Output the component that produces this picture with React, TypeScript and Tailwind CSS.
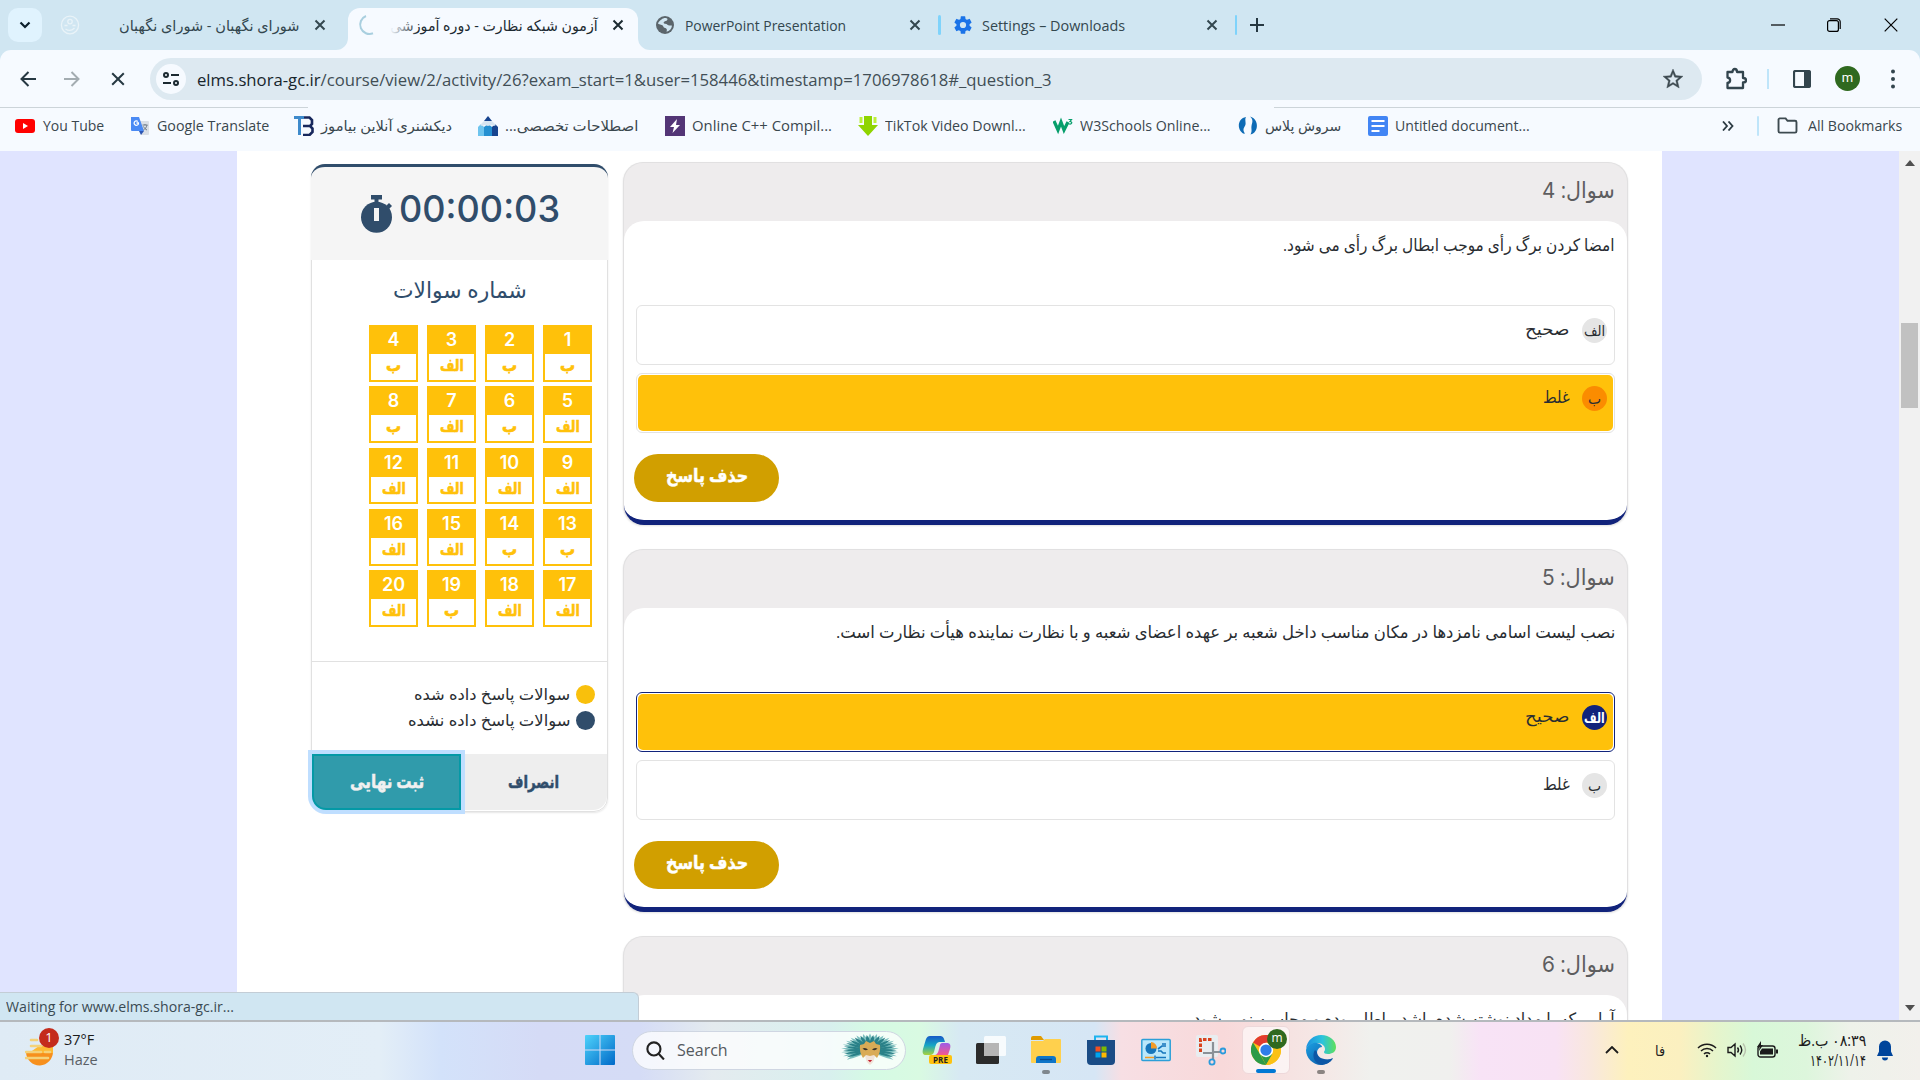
import { useLayoutEffect, useRef, useState } from "react";
import type { ReactNode } from "react";

/* Single line of text set to an exact measure. */
function Fit({ w, rtl, className = "", children }: { w: number; rtl?: boolean; className?: string; children: ReactNode }) {
  const ref = useRef<HTMLSpanElement>(null);
  const [scale, setScale] = useState(1);
  useLayoutEffect(() => {
    if (ref.current) setScale(w / ref.current.offsetWidth);
  }, [w]);
  return (
    <span dir="ltr" className={"block shrink-0 whitespace-nowrap " + className} style={{ width: w }}>
      <span ref={ref} dir={rtl ? "rtl" : "ltr"} className="inline-block origin-left" style={{ transform: `scaleX(${scale})` }}>
        {children}
      </span>
    </span>
  );
}

function Cross({ className = "" }: { className?: string }) {
  return (
    <svg viewBox="0 0 12 12" className={"h-3 w-3 shrink-0 " + className} fill="none" stroke="currentColor" strokeWidth="2">
      <path d="M1.5 1.5l9 9M10.5 1.5l-9 9" />
    </svg>
  );
}

function TabStrip() {
  return (
    <div className="flex h-[50px] items-center bg-[#d0e6f2] text-[14.5px] text-[#33474f]">
      <div className="ml-2 flex h-[34px] w-[34px] shrink-0 items-center justify-center rounded-[10px] bg-[#e0f3fe]">
        <svg viewBox="0 0 12 12" className="h-3 w-3" fill="none" stroke="#0c1f2b" strokeWidth="2.2"><path d="M1.5 3.5L6 8l4.5-4.5" /></svg>
      </div>
      <svg viewBox="0 0 20 20" className="ml-[18px] h-5 w-5 shrink-0" fill="none" stroke="#e9f3f8" strokeWidth="1.3">
        <ellipse cx="10" cy="10" rx="8.6" ry="8.8" /><circle cx="10" cy="6.6" r="2.2" /><path d="M4.5 10.5h3M12.5 10.5h3M5.5 14c3 2 6 2 9-1" />
      </svg>
      <Fit w={180} rtl className="ml-[39px] text-[15px]">شورای نگهبان - شورای نگهبان</Fit>
      <Cross className="ml-[15px]" />
      <div className="relative ml-[22px] flex h-[42px] w-[290px] shrink-0 items-center self-end rounded-t-[12px] bg-[#f6faff] pb-2 text-[#1c2a31]">
        <svg viewBox="0 0 12 12" className="absolute bottom-0 -left-3 h-3 w-3" fill="#f6faff"><path d="M12 0v12H0A12 12 0 0 0 12 0z" /></svg>
        <svg viewBox="0 0 12 12" className="absolute -right-3 bottom-0 h-3 w-3" fill="#f6faff"><path d="M0 0v12h12A12 12 0 0 1 0 0z" /></svg>
        <svg viewBox="0 0 22 22" className="ml-[8px] h-[22px] w-[22px] shrink-0" fill="none" stroke="#a9cfdf" strokeWidth="2"><path d="M10 2A9.3 9.3 0 0 0 17 19.300" /></svg>
        <div className="relative ml-[12px]">
          <Fit w={208} rtl className="text-[15px]">آزمون شبکه نظارت - دوره آموزشی</Fit>
          <div className="absolute inset-y-0 left-0 w-7 bg-linear-to-r from-[#f6faff] to-transparent" />
        </div>
        <Cross className="ml-[14px]" />
      </div>
      <svg viewBox="0 0 20 20" className="ml-[17px] h-5 w-5 shrink-0">
        <circle cx="10" cy="10" r="9" fill="#5b656b" />
        <path d="M6.500 4.500c1.500-1.500 5-2 6-.5 0 1.500-1.500 2-3 2.500-1.500.8-1 2 .5 2.300 2.500.2 2.500 1.700 4.500 1.700.8 0 1.800-.3 2.500.3-.5 3-2.500 5.500-5.500 6 .3-1 .8-2.500-.3-3.300-1-.8-2.700-.5-3-2.200C7.800 9.300 4.500 10 3 8.500c.5-1.700 2-3 3.500-4z" fill="#d0e6f2" />
      </svg>
      <Fit w={161} className="mt-[1px] ml-[10px]">PowerPoint Presentation</Fit>
      <Cross className="ml-[63px]" />
      <div className="ml-[17px] h-5 w-[2.500px] shrink-0 rounded bg-[#7fd3fb]" />
      <svg viewBox="0 0 24 24" className="ml-[11px] h-[22px] w-[22px] shrink-0" fill="#1a73e8">
        <path d="M19.14 12.94c.04-.3.06-.61.06-.94s-.02-.64-.07-.94l2.030-1.580a.5.5 0 0 0 .12-.61l-1.920-3.320a.49.49 0 0 0-.59-.22l-2.390.96a7 7 0 0 0-1.620-.94l-.36-2.540A.48.48 0 0 0 13.920 2.400h-3.840c-.24 0-.43.17-.47.41l-.36 2.540c-.59.24-1.130.57-1.620.94l-2.390-.96a.48.48 0 0 0-.59.22L2.740 8.870c-.12.21-.08.47.12.61l2.030 1.580c-.05.3-.09.63-.09.94s.02.64.07.94l-2.030 1.580a.5.5 0 0 0-.12.61l1.920 3.320c.12.22.37.29.59.22l2.390-.96c.5.38 1.030.7 1.620.94l.36 2.540c.05.24.24.41.48.41h3.840c.24 0 .44-.17.47-.41l.36-2.540a6.800 6.800 0 0 0 1.620-.94l2.390.96c.22.08.47 0 .59-.22l1.920-3.320a.5.5 0 0 0-.12-.61zM12 15.400a3.400 3.400 0 1 1 0-6.800 3.400 3.400 0 0 1 0 6.800z" />
      </svg>
      <Fit w={143} className="mt-[1px] ml-[8px]">Settings – Downloads</Fit>
      <Cross className="ml-[81px]" />
      <div className="ml-[17px] h-5 w-[2.500px] shrink-0 rounded bg-[#7fd3fb]" />
      <svg viewBox="0 0 14 14" className="ml-[13px] h-[14px] w-[14px] shrink-0" fill="none" stroke="#263842" strokeWidth="2"><path d="M7 0v14M0 7h14" /></svg>
      <div className="ml-auto flex items-center pr-[22px] text-black">
        <svg viewBox="0 0 14 14" className="h-[14px] w-[14px]" fill="none" stroke="currentColor" strokeWidth="1.200"><path d="M0 7h14" /></svg>
        <svg viewBox="0 0 14 14" className="ml-[42px] h-[14px] w-[14px]" fill="none" stroke="currentColor" strokeWidth="1.200"><rect x=".6" y="2.600" width="10.800" height="10.800" rx="2" /><path d="M3 .8h7a3 3 0 0 1 3.200 3v7.200" /></svg>
        <svg viewBox="0 0 14 14" className="ml-[43px] h-[14px] w-[14px]" fill="none" stroke="currentColor" strokeWidth="1.200"><path d="M.7.7l12.600 12.600M13.300.7L.7 13.300" /></svg>
      </div>
    </div>
  );
}

function Toolbar() {
  return (
    <div className="bg-[#d0e6f2]">
      <div className="flex h-[57px] items-center rounded-t-[11px] bg-[#f6faff]">
        <svg viewBox="0 0 16 16" className="ml-5 h-4 w-4 shrink-0" fill="none" stroke="#263842" strokeWidth="2"><path d="M16 8H2M8.500 1L1.500 8l7 7" /></svg>
        <svg viewBox="0 0 16 16" className="ml-[28px] h-4 w-4 shrink-0" fill="none" stroke="#a3acb1" strokeWidth="2"><path d="M0 8h14M7.500 1l7 7-7 7" /></svg>
        <svg viewBox="0 0 14 14" className="ml-[31px] h-[14px] w-[14px] shrink-0" fill="none" stroke="#263842" strokeWidth="2"><path d="M1.200 1.200l11.600 11.600M12.800 1.200L1.200 12.800" /></svg>
        <div className="ml-[25px] mt-[1px] flex h-[42px] w-[1552px] shrink-0 items-center rounded-full bg-[#dde9f1]">
          <div className="ml-1.5 flex h-[30px] w-[30px] items-center justify-center rounded-full bg-[#f6faff]">
            <svg viewBox="0 0 16 14" className="h-[14px] w-4" fill="none" stroke="#1c2a31" strokeWidth="2"><circle cx="3" cy="3" r="2" /><path d="M8 3h8M0 11h8" /><circle cx="13" cy="11" r="2" /></svg>
          </div>
          <Fit w={854} className="mt-[2px] ml-[11px] text-[16.500px] text-[#414e55]">
            <span className="text-[#17252c]">elms.shora-gc.ir</span>/course/view/2/activity/26?exam_start=1&amp;user=158446&amp;timestamp=1706978618#_question_3
          </Fit>
          <svg viewBox="0 0 24 24" className="mr-[17px] ml-auto h-6 w-6" fill="#3d4a50" stroke="#3d4a50" strokeWidth=".4"><path d="M22 9.240l-7.190-.62L12 2 9.190 8.630 2 9.240l5.460 4.730L5.820 21 12 17.270 18.180 21l-1.630-7.030zM12 15.400l-3.760 2.270 1-4.280-3.320-2.880 4.380-.38L12 6.100l1.710 4.040 4.380.38-3.320 2.880 1 4.280z" /></svg>
        </div>
        <svg viewBox="0 0 22 24" className="ml-[23px] h-6 w-[22px] shrink-0" fill="none" stroke="#33454e" strokeWidth="2.300" strokeLinejoin="round"><path d="M2.500 5h5c0-4 4.500-4 4.500 0h6v6c4 0 4 4.500 0 4.500V21H2.500v-5c3.500-.5 3.500-5 0-5.500z" /></svg>
        <div className="ml-[20px] h-5 w-[2px] shrink-0 bg-[#bfe5fa]" />
        <svg viewBox="0 0 18 18" className="ml-[24px] h-[18px] w-[18px] shrink-0"><rect x="1" y="1" width="16" height="16" rx="1.500" fill="none" stroke="#33454e" strokeWidth="2.200" /><path d="M11 1h6v16h-6z" fill="#33454e" /></svg>
        <div className="ml-[24px] flex h-[25px] w-[25px] shrink-0 items-center justify-center rounded-full bg-[#2f691f] pb-0.5 font-[Roboto] text-[13px] text-white">m</div>
        <svg viewBox="0 0 4 20" className="ml-[31px] h-5 w-1 shrink-0" fill="#33454e"><circle cx="2" cy="2.500" r="2" /><circle cx="2" cy="10" r="2" /><circle cx="2" cy="17.500" r="2" /></svg>
      </div>
    </div>
  );
}

function Bookmarks() {
  const icon = "h-5 w-5 shrink-0";
  return (
    <div className="h-[44px] bg-[#f6faff]">
      <div className="flex h-px justify-between"><div className="w-[308px] bg-[#ccd4d9]" /><div className="w-[646px] bg-[#ccd4d9]" /></div>
      <div className="flex h-[35px] items-center text-[14px] text-[#3a474e]">
        <svg viewBox="0 0 20 20" className={icon + " ml-[15px]"}><rect y="3" width="20" height="14" rx="3" fill="#f00" /><path d="M8 7v6l5-3z" fill="#fff" /></svg>
        <Fit w={61} className="ml-2">You Tube</Fit>
        <svg viewBox="0 0 20 20" className={icon + " ml-[26px]"}><path d="M8 5h10a1 1 0 0 1 1 1v12a1 1 0 0 1-1 1h-7z" fill="#dadfe6" /><path d="M1 1h8l5 14H2a1 1 0 0 1-1-1z" fill="#4a8af4" /><path d="M9 15h5l-3 4z" fill="#2d56b3" /><path d="M9 7H6.500M8.500 7.500a2.200 2.200 0 1 1-.7-2" stroke="#fff" fill="none" strokeWidth="1.300" /><path d="M12.500 9h5M15 8v1M17 9c-.5 2.500-2 4-3.500 5M13.500 10.500c1 1.800 2 2.800 3.500 3.500" stroke="#6e7a86" fill="none" /></svg>
        <Fit w={112} className="ml-[7px]">Google Translate</Fit>
        <svg viewBox="0 0 20 20" className={icon + " ml-[25px]"} fill="none"><path d="M0 1.500h10M5.500 2v17" stroke="#3e8acb" strokeWidth="3" /><path d="M9 19h6.500l3-3v-3.500L16 10l2-2V4l-2.500-2.500H10M9 10h7" stroke="#17275c" strokeWidth="2.600" /></svg>
        <Fit w={131} rtl className="ml-[7px]">دیکشنری آنلاین بیاموز</Fit>
        <svg viewBox="0 0 20 20" className={icon + " ml-[26px]"}><path d="M0 11l3-3 3 3v9H0z" fill="#6ec4ee" /><path d="M6 11l4-3 4 3v9H6z" fill="#2590d1" /><path d="M14 11l3-3 3 3v9h-6z" fill="#17448f" /><path d="M10 0l4 5H6z" fill="#17448f" /><path d="M6 5h8l4 4-2 1-3-1-3 1-3-1-3 1-2-1z" fill="#d7e5f1" /></svg>
        <Fit w={133} rtl className="ml-[7px]">اصطلاحات تخصصی...</Fit>
        <svg viewBox="0 0 20 20" className={icon + " ml-[27px]"}><path d="M0 0h20v20H0z" fill="#533576" /><path d="M12 3L5 11h4l-1.500 6L15 9h-4z" fill="#fff" /></svg>
        <Fit w={140} className="ml-[7px]">Online C++ Compil...</Fit>
        <svg viewBox="0 0 20 20" className={icon + " ml-[26px]"}><path d="M6 0h8v9h6L10 20 0 9h6z" fill="#8fd400" /><path d="M1.500 1h3v6h-3zM15.500 1h3v6h-3z" fill="#bdf03a" /></svg>
        <Fit w={141} className="ml-[7px]">TikTok Video Downl...</Fit>
        <svg viewBox="0 0 20 20" className={icon + " ml-[27px]"} fill="none" stroke="#069e6b"><path d="M1 5l4 9 3-8 3 8 4-8" strokeWidth="3.200" /><path d="M15.500 3.500h3L17 5.500c3 0 2 3.500-1.500 2.200" strokeWidth="1.200" /></svg>
        <Fit w={131} className="ml-[7px]">W3Schools Online...</Fit>
        <svg viewBox="0 0 20 20" className={icon + " ml-[27px]"} fill="#0d6bb5"><path d="M8 1C1 2-1 10 2.500 15c1.500 2 3 3 4.500 2.500C3.500 13 7 11 7.500 8.500 8 6 6.500 3.500 8 1z" /><path d="M12 .5c4 3.500 2 6.500 1.500 9.500-.5 3 1 5-1 8.500 6.500-1.500 7.500-9 5.500-13C17 3 14.500 1 12 .5z" /></svg>
        <Fit w={76} rtl className="ml-[7px]">سروش پلاس</Fit>
        <svg viewBox="0 0 20 20" className={icon + " ml-[27px]"}><rect width="20" height="20" rx="2" fill="#4285f4" /><path d="M3.500 5h13M3.500 10h13M3.500 15h8" stroke="#fff" strokeWidth="2.200" /></svg>
        <Fit w={135} className="ml-[7px]">Untitled document...</Fit>
        <svg viewBox="0 0 12 10" className="mr-[23px] ml-auto h-[10px] w-3" fill="none" stroke="#2b3a42" strokeWidth="1.800"><path d="M1 .5L5 5 1 9.500M6.500.5l4 4.500-4 4.500" /></svg>
        <div className="h-5 w-[2.500px] rounded bg-[#bfe5fa]" />
        <svg viewBox="0 0 22 18" className="ml-[18px] h-[17px] w-[21px]" fill="none" stroke="#3d4a50" strokeWidth="2"><path d="M1.500 2.500V15a1.500 1.500 0 0 0 1.500 1.500h16a1.500 1.500 0 0 0 1.500-1.500V5.500A1.500 1.500 0 0 0 19 4h-8L9 1.500H3a1.500 1.500 0 0 0-1.500 1z" /></svg>
        <Fit w={94} className="mr-[18px] ml-[10px]">All Bookmarks</Fit>
      </div>
    </div>
  );
}

const answers = "ب ب الف ب الف ب الف ب الف الف الف الف ب ب الف الف الف الف ب الف".split(" ");

function Sidebar() {
  return (
    <div className="mt-[13px] ml-[74px] h-[648px] w-[297px] shrink-0 rounded-[14px] border border-[#e1e1e1] shadow-[0_1px_2px_rgba(0,0,0,.1)]">
      <div className="-mx-px -mt-px flex h-[96px] rounded-t-[14px] border-t-[3px] border-[#304d6b] bg-[#f5f5f5] text-[#304d6b]">
        <svg viewBox="0 0 31 38" className="mt-[28px] ml-[50px] h-[38px] w-[31px]" fill="#304d6b"><path d="M10 0h11v4.500h-3.500v4h-4v-4H10z" /><circle cx="15.500" cy="22.300" r="15.500" /><path d="M24 12l4-4 3 3-4 4z" /><path d="M13 13h5v13h-5z" fill="#f5f5f5" /></svg>
        <Fit w={161} className="mt-[17px] ml-[7px] font-[Inter] text-[37px] leading-[50px] font-medium">00:00:03</Fit>
      </div>
      <div className="flex h-[65px] justify-center pt-[12px] text-[#304d6b]"><Fit w={134} rtl className="text-[22px] leading-[34px]">شماره سوالات</Fit></div>
      <div dir="rtl" className="mr-[15px] grid grid-cols-[49px_49px_49px_49px] gap-x-[9px] gap-y-[4.500px] font-bold">
        {answers.map((a, i) => (
          <div key={i} className="flex h-[56.800px] flex-col border-2 border-[#ffc10a] text-center text-[#ffc10a]">
            <div className="h-[27px] bg-[#ffc10a] font-[Inter] text-[18px] leading-[25px] font-semibold text-white">{i + 1}</div>
            <div className="flex justify-center"><Fit w={a === "ب" ? 15 : 24} rtl className="text-[16px] leading-[22px] font-bold [-webkit-text-stroke:0.7px_#ffc10a]">{a}</Fit></div>
          </div>
        ))}
      </div>
      <div className="mt-[34px] border-t border-[#e1e1e1]" />
      <div dir="rtl" className="flex h-[92px] flex-col gap-[7px] pt-[23px] pr-[12px] text-[#292d32]">
        <div className="flex h-[19px] items-center gap-[6px]"><i className="h-[19px] w-[19px] rounded-full bg-[#f9c00c]" /><Fit w={156} rtl className="text-[16px]">سوالات پاسخ داده شده</Fit></div>
        <div className="flex h-[19px] items-center gap-[6px]"><i className="h-[19px] w-[19px] rounded-full bg-[#304d6b]" /><Fit w={162} rtl className="text-[16px]">سوالات پاسخ داده نشده</Fit></div>
      </div>
      <div className="flex h-[56px] rounded-b-[14px] bg-[#eee] font-bold">
        <div className="flex w-[149px] items-center justify-center rounded-bl-[14px] border-2 border-[#0499a6] bg-[#309bab] text-[#f0f0f0] shadow-[0_0_0_4px_#bfdeff]"><Fit w={74} rtl className="text-[18px] [-webkit-text-stroke:0.5px_#f0f0f0]">ثبت نهایی</Fit></div>
        <div className="flex flex-1 items-center justify-center pr-px text-[#304d6b]"><Fit w={51} rtl className="text-[17px] [-webkit-text-stroke:0.5px_#304d6b]">انصراف</Fit></div>
      </div>
    </div>
  );
}

function Option({ letter, text, picked, focused }: { letter: string; text: string; picked?: boolean; focused?: boolean }) {
  return (
    <div className={"h-[59.500px] rounded-[6px] border p-px " + (focused ? "border-[#11237b]" : "border-[#e3e3e3]")}>
      <div className={"flex h-full gap-[12px] rounded-[5px] pt-[11px] pr-[6px] " + (picked ? "bg-[#ffc10a]" : "bg-white")}>
        <div className={"flex h-[25px] w-[25px] shrink-0 items-center justify-center rounded-full text-[15px] " + (focused ? "bg-[#11237b] font-bold text-white" : picked ? "bg-[#fb8c00] text-[#292d32]" : "bg-[#e5e5e5] text-[#292d32]")}>
          <Fit w={letter === "ب" ? 13 : 21} rtl className="-mt-[2px] leading-[22px]">{letter}</Fit>
        </div>
        <Fit w={text === "غلط" ? 27 : 45} rtl className="text-[17px] leading-[22px] text-[#292d32]">{text}</Fit>
      </div>
    </div>
  );
}

function Question({ n, w, text, picked, focused }: { n: number; w: number; text: string; picked: number; focused?: boolean }) {
  return (
    <div dir="rtl" className="h-[363px] w-[1005px] shrink-0 rounded-[20px] border border-b-0 border-[#e1e0e1] bg-[#eeeced] shadow-[0_1px_2px_rgba(0,0,0,.12)]">
      <div className="flex h-[58px] pt-[9px] pr-[12px]"><Fit w={73} rtl className="text-[22px] leading-[34px] text-[#5d5d5f]">سوال: <span className="font-[Inter]">{n}</span></Fit></div>
      <div className="h-[304px] rounded-[20px] border-b-[5px] border-[#11237b] bg-white px-[12px]">
        <div className="h-[84px] pt-[10px]"><Fit w={w} rtl className="text-[17px] leading-[28px] text-[#292d32]">{text}</Fit></div>
        <div className="flex flex-col gap-[8.500px]">
          <Option letter="الف" text="صحیح" picked={picked === 0} focused={focused && picked === 0} />
          <Option letter="ب" text="غلط" picked={picked === 1} focused={focused && picked === 1} />
        </div>
        <div className="-ml-[2px] flex justify-end pt-[21px]">
          <div className="flex h-[48px] w-[145px] items-center justify-center rounded-full bg-[#d19f00] pb-1 text-white"><Fit w={82} rtl className="text-[18px] font-bold [-webkit-text-stroke:0.5px_white]">حذف پاسخ</Fit></div>
        </div>
      </div>
    </div>
  );
}

function Page() {
  return (
    <div className="relative flex h-[869px] overflow-hidden bg-[#e0e4ff]">
      <div className="ml-[237px] flex w-[1425px] items-start bg-white">
        <Sidebar />
        <div className="mt-[11px] ml-[15px] flex flex-col gap-[24px]">
          <Question n={4} w={332} picked={1} text="امضا کردن برگ رأی موجب ابطال برگ رأی می شود." />
          <Question n={5} w={779} picked={0} focused text="نصب لیست اسامی نامزدها در مکان مناسب داخل شعبه بر عهده اعضای شعبه و با نظارت نماینده هیأت نظارت است." />
          <Question n={6} w={426} picked={0} text="آرایی که با مداد نوشته شده باشد، باطل بوده و محاسبه نمی شود." />
        </div>
      </div>
      <div className="ml-auto flex w-[21px] flex-col items-center bg-[#f1f1f1]">
        <svg viewBox="0 0 10 6" className="mt-[9px] h-[6px] w-[10px]" fill="#505050"><path d="M5 0l5 6H0z" /></svg>
        <div className="mt-[157px] h-[85px] w-[17px] bg-[#c1c1c1]" />
        <svg viewBox="0 0 10 6" className="mt-auto mb-[9px] h-[6px] w-[10px]" fill="#505050"><path d="M5 6l5-6H0z" /></svg>
      </div>
      <div className="absolute bottom-0 left-0 flex h-[28px] w-[639px] items-center rounded-tr-[6px] border-t border-r border-[#c3cdd6] bg-[#d0e6f2] pl-[6px] text-[14px] text-[#3a4a52]">
        <Fit w={228}>Waiting for www.elms.shora-gc.ir...</Fit>
      </div>
    </div>
  );
}

const backFeathers = [-126, -112, -98, -84, -70, -56, -42, -28, -14, 0, 14, 28, 42, 56, 70, 84, 98, 112, 126];
const frontFeathers = [-119, -105, -91, -77, -63, -49, -35, -21, -7, 7, 21, 35, 49, 63, 77, 91, 105, 119];

function Taskbar() {
  return (
    <div className="flex h-[60px] items-center border-t-2 border-[#b5b9bd] bg-[linear-gradient(90deg,#dfebf5_0px,#e3eef7_380px,#d3e2fa_440px,#d5dbf6_540px,#d5dcf6_640px,#e4ebef_713px,#d8f0ee_830px,#d5fae4_870px,#d9fae2_920px,#d7e9f3_960px,#d6e6f5_1095px,#f7dfe4_1121px,#f8d9da_1223px,#f5e8e6_1325px,#f0f1ee_1370px,#f0f0ee_1450px,#f8e3f6_1480px,#f8e2f4_1556px,#f9e8dc_1592px,#fdf1bd_1628px,#fbf0c0_1680px,#e6f5cc_1717px,#d8f8d8_1753px,#ddf6dc_1806px,#eef2ea_1850px,#f2f0ec_1920px)] pb-[2px]">
      <div className="relative ml-[25px] h-[38px] w-[38px] shrink-0">
        <svg viewBox="0 0 38 38" className="h-[38px] w-[38px]"><path d="M1 20h27a13.500 14 0 0 1-27 1z" fill="#f7901d" /><path d="M14 15h14v7H4z" fill="#fdb933" /><path d="M6 9h6M6 15h10M1 21h15M20 21h5M1 27h22" stroke="#f4d27a" strokeWidth="2.600" strokeLinecap="round" /></svg>
        <div className="absolute -top-[3px] left-[14px] flex h-5 w-5 items-center justify-center rounded-full bg-[#c42b1c] text-[13px] text-white">1</div>
      </div>
      <div className="ml-[1px] flex flex-col text-[14.500px] leading-[20px] text-[#1b1b1b]"><Fit w={30}>37°F</Fit><Fit w={34} className="text-[#5a6066]">Haze</Fit></div>
      <svg viewBox="0 0 30 30" className="ml-[487px] h-[30px] w-[30px] shrink-0">
        <defs><linearGradient id="win" x1="0" y1="0" x2="1" y2="1"><stop stopColor="#4fd3fb" /><stop offset="1" stopColor="#0069c8" /></linearGradient></defs>
        <path d="M1 0h13.500v14.500H0V1a1 1 0 0 1 1-1zM15.500 0H29a1 1 0 0 1 1 1v13.500H15.500zM0 15.500h14.500V30H1a1 1 0 0 1-1-1zM15.500 15.500H30V29a1 1 0 0 1-1 1H15.500z" fill="url(#win)" />
      </svg>
      <div className="ml-[17px] flex h-[39px] w-[274px] shrink-0 items-center rounded-full border border-[#cfd6e2] bg-white/75">
        <svg viewBox="0 0 18 18" className="ml-[13px] h-[19px] w-[19px]" fill="none" stroke="#222" strokeWidth="2"><circle cx="7.500" cy="7.500" r="6.200" /><path d="M12 12l5 5.500" /></svg>
        <Fit w={51} className="ml-[12px] text-[16px] text-[#55595e]">Search</Fit>
        <svg viewBox="-30 -17 60 34" className="mr-[5px] ml-auto h-[34px] w-[60px]">
          {backFeathers.map((a) => (
            <path key={a} d="M0 0Q3-12 0-20Q-3-12 0 0z" fill="#7dc0bf" transform={`scale(1.450 .82) rotate(${a})`} />
          ))}
          {frontFeathers.map((a) => (
            <path key={a} d="M0 0Q2.800-11 0-18.500Q-2.800-11 0 0z" fill="#2a8188" transform={`scale(1.450 .82) rotate(${a})`} />
          ))}
          <path d="M-5 3L0-2L5 3Q5 12 0 15Q-5 12-5 3z" fill="#f1e3d8" />
          <path d="M-10-5L-6-6L-4-9L0-7L4-9L6-6L10-5Q11 2 7 8L4 5L0 6L-4 5L-7 8Q-11 2-10-5z" fill="#d9ab56" />
          <path d="M-7.500-1.500q3-1.500 5.500 1-3 2-5.500-1zM7.500-1.500q-3-1.500-5.500 1 3 2 5.500-1z" fill="#3a3328" /><path d="M-2.200 10h4.400L0 12.300z" fill="#c3202f" />
        </svg>
      </div>
      <svg viewBox="0 0 30 30" className="ml-[16px] h-[30px] w-[30px] shrink-0">
        <defs>
          <linearGradient id="cpa" x1="0" y1="0" x2="0" y2="1"><stop stopColor="#1659c7" /><stop offset=".5" stopColor="#16a7c4" /><stop offset="1" stopColor="#a9d33b" /></linearGradient>
          <linearGradient id="cpb" x1="0" y1="0" x2="0" y2="1"><stop stopColor="#9d5be8" /><stop offset="1" stopColor="#f5588d" /></linearGradient>
        </defs>
        <path d="M8 1h10c3 0 4 2 5 6h-5c-3 0-4 2-5 6l-1 4c-1 3-3 3-5 3H4c-3 0-4-2-3-6L4 4c1-2 2-3 4-3z" fill="url(#cpa)" />
        <path d="M20 8h5c3 0 4 2 3 6l-2 6H12c3 0 4-2 5-6l1-4c0-1 1-2 2-2z" fill="url(#cpb)" />
        <rect x="7" y="20" width="23" height="9" rx="2" fill="#ffc20e" />
        <text x="18.500" y="27.500" textAnchor="middle" fontSize="8" fontWeight="bold" fontFamily="Open Sans" fill="#222">PRE</text>
      </svg>
      <svg viewBox="0 0 30 30" className="ml-[24px] h-[30px] w-[30px] shrink-0"><rect y="8" width="23" height="21" rx="1.500" fill="#2b2b2b" /><rect x="8" y="1" width="22" height="20" rx="1.500" fill="#fff" opacity=".8" /><path d="M8 8h15v13H8z" fill="#b5b5b5" /></svg>
      <div className="relative ml-[25px] h-[30px] w-[30px] shrink-0">
        <svg viewBox="0 0 30 30"><path d="M0 3a2 2 0 0 1 2-2h8l3 4H0z" fill="#e09b00" /><path d="M0 6h12l2-2h15a1 1 0 0 1 1 1v22a1 1 0 0 1-1 1H1a1 1 0 0 1-1-1z" fill="#ffd04d" /><path d="M5 28v-4a3 3 0 0 1 3-3h14a3 3 0 0 1 3 3v4z" fill="#0f76c8" /><path d="M9 24.500h12" stroke="#0a4a8c" strokeWidth="1.300" /></svg>
        <div className="absolute top-[35px] left-[11px] h-1 w-2 rounded-full bg-[#7f878d]" />
      </div>
      <svg viewBox="0 0 30 30" className="ml-[25px] h-[30px] w-[30px] shrink-0"><path d="M9 5V1.500h12V5" fill="none" stroke="#1eb4ef" strokeWidth="2" /><path d="M1 5h28v21a4 4 0 0 1-4 4H5a4 4 0 0 1-4-4z" fill="#1a4c86" /><path d="M9.500 11.500h5v5h-5z" fill="#f25022" /><path d="M15.500 11.500h5v5h-5z" fill="#7fba00" /><path d="M9.500 17.500h5v5h-5z" fill="#00a4ef" /><path d="M15.500 17.500h5v5h-5z" fill="#ffb900" /></svg>
      <svg viewBox="0 0 30 30" className="ml-[25px] h-[30px] w-[30px] shrink-0"><rect x=".8" y="4.500" width="28.400" height="21" rx="1" fill="#b9e7fb" stroke="#2c9fd8" strokeWidth="1.500" /><circle cx="10" cy="13.500" r="5.500" fill="#1676bc" /><path d="M10 13.500V7a6.500 6.500 0 0 1 6 6.500z" fill="#f39b26" /><path d="M17 14l4-3h4M17 16h3l2 2h3M21 9h4" stroke="#1676bc" fill="none" strokeWidth="1.600" /><path d="M4 22.500h9" stroke="#f39b26" strokeWidth="1.500" /><path d="M15 22.500h10M14 20.500v4" stroke="#1676bc" strokeWidth="1.500" /></svg>
      <svg viewBox="0 0 30 32" className="ml-[25px] h-8 w-[30px] shrink-0" fill="none"><rect x="0" y="1" width="22" height="22" rx="2" fill="#e9edf0" /><path d="M4.500 18V5.500H16" stroke="#d9441e" strokeWidth="3" strokeDasharray="3.500 1.500" /><path d="M17 8v11H7M17 18h8M17 18v8" stroke="#8a9197" strokeWidth="2.200" /><circle cx="27" cy="17" r="2.500" stroke="#2b9bdc" strokeWidth="1.800" /><circle cx="16" cy="28" r="2.600" stroke="#2b9bdc" strokeWidth="1.800" /></svg>
      <div className="relative ml-[16px] flex h-[48px] w-[48px] shrink-0 items-center justify-center rounded-[6px] border border-[#eed8da] bg-white/60">
        <svg viewBox="0 0 48 48" className="h-[30px] w-[30px]"><circle cx="24" cy="24" r="24" fill="#fbc116" /><path d="M24 24L3.200 12A24 24 0 0 1 44.800 12z" fill="#e33b2e" /><path d="M3.200 12L14 30l10 18A24 24 0 0 1 3.200 12z" fill="#2c9b48" /><path d="M14.500 29.500L24 48l11-18z" fill="#2c9b48" /><path d="M34.500 29.500L24 48A24 24 0 0 0 44.800 12H24z" fill="#fbc116" /><circle cx="24" cy="24" r="11.500" fill="#fff" /><circle cx="24" cy="24" r="9" fill="#2f7de9" /></svg>
        <div className="absolute top-[2px] right-[2px] flex h-5 w-5 items-center justify-center rounded-full bg-[#2f691f] pb-0.5 text-[12px] text-white">m</div>
        <div className="absolute bottom-0 left-[13px] h-1 w-5 rounded-full bg-[#0078d4]" />
      </div>
      <div className="relative ml-[16px] h-[30px] w-[30px] shrink-0">
        <svg viewBox="0 0 30 30">
          <defs>
            <linearGradient id="ea"><stop stopColor="#1b8fe0" /><stop offset=".55" stopColor="#2cc3dc" /><stop offset="1" stopColor="#5fe05a" /></linearGradient>
            <linearGradient id="eb" x1="0" y1="0" x2="1" y2="1"><stop stopColor="#1ba0e2" /><stop offset="1" stopColor="#0b4f9f" /></linearGradient>
          </defs>
          <path d="M0 14C1 5 8 0 15 0c9 0 15 6 15 12 0 5-4 7-8 7-3 0-4-1-4-2s1-1 1-3c0-3-3-6-8-6C6 8 2 10 0 14z" fill="url(#ea)" />
          <path d="M0 15c1-5 6-8 11-7 4 1 5 3 5 4-3 0-5 3-5 6 0 6 8 9 16 5-3 5-8 7-12 7C7 30 0 23 0 15z" fill="url(#eb)" />
          <path d="M11 17c0 6 8 9 16 6.500C24 28 19 30 15 29.500 9 29 5 21 9 15z" fill="#0d57a6" />
        </svg>
        <div className="absolute top-[35px] left-[11px] h-1 w-2 rounded-full bg-[#8b8482]" />
      </div>
      <svg viewBox="0 0 14 8" className="ml-[269px] h-2 w-[14px] shrink-0" fill="none" stroke="#1b1b1b" strokeWidth="1.800"><path d="M1 7l6-6 6 6" /></svg>
      <Fit w={10} rtl className="ml-[36px] text-[14px] text-[#1b1b1b]">فا</Fit>
      <svg viewBox="0 0 20 16" className="ml-[32px] h-4 w-5 shrink-0" fill="none" stroke="#1b1b1b" strokeWidth="1.500"><path d="M1 6a12.500 12.500 0 0 1 18 0M4 9a8.400 8.400 0 0 1 12 0M7 12a4.200 4.200 0 0 1 6 0" /><circle cx="10" cy="14" r="1.200" fill="#1b1b1b" stroke="none" /></svg>
      <svg viewBox="0 0 20 16" className="ml-[10px] h-4 w-5 shrink-0" fill="none" stroke="#1b1b1b" strokeWidth="1.400"><path d="M1 5.500h3L8 2v12l-4-3.500H1zM10.500 5.500q2 2.500 0 5M13 3.500q3.500 4.500 0 9" /><path d="M16 1.500q5 6.500 0 13" stroke="#b9c3ae" /></svg>
      <svg viewBox="0 0 21 18" className="ml-[10px] h-[18px] w-[21px] shrink-0"><rect x="1" y="5" width="17" height="11" rx="2.500" fill="none" stroke="#1b1b1b" strokeWidth="1.400" /><path d="M5 7.500h11v6H3v-3zM19 8.500h2v4h-2z" fill="#1b1b1b" /><path d="M4 0L0 6h2.500L2 10l4-6H4z" fill="#1b1b1b" /></svg>
      <div dir="rtl" className="ml-auto flex w-[69px] flex-col text-[15.500px] leading-[20px] text-[#1b1b1b]"><Fit w={68} rtl>۰۸:۳۹ ب.ظ</Fit><Fit w={56} rtl>۱۴۰۲/۱۱/۱۴</Fit></div>
      <svg viewBox="0 0 16 20" className="mr-[27px] ml-[11px] h-[21px] w-4 shrink-0" fill="#00459b"><path d="M8 0a6 6 0 0 1 6 6v5l2 4.500H0L2 11V6a6 6 0 0 1 6-6zM5 17h6a3 3 0 0 1-6 0z" /></svg>
    </div>
  );
}

export default function App() {
  return (
    <div className="h-[1080px] w-[1920px] overflow-hidden bg-white font-['Open_Sans','DejaVu_Sans',sans-serif]">
      <TabStrip />
      <Toolbar />
      <Bookmarks />
      <Page />
      <Taskbar />
    </div>
  );
}
